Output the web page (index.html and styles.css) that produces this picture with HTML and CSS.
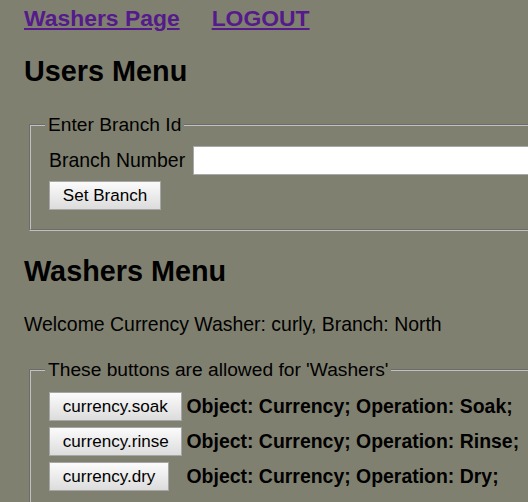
FILE: index.html
```html
<!DOCTYPE html>
<html>
<head>
<meta charset="utf-8">
<title>Washers</title>
<link rel="stylesheet" href="styles.css">
</head>
<body>
<nav class="topnav">
  <a class="navlink" href="#">Washers Page</a>
  <a class="navlink" href="#">LOGOUT</a>
</nav>
<h2 class="menu-title first">Users Menu</h2>
<fieldset class="box box-branch">
  <legend class="box-legend">Enter Branch Id</legend>
  <div class="box-body">
    <div class="field-row">
      <label class="field-label" for="branch">Branch Number</label>
      <input class="field-input" id="branch" type="text">
    </div>
    <div class="btn-row">
      <button class="btn" type="button">Set Branch</button>
    </div>
  </div>
</fieldset>
<h2 class="menu-title">Washers Menu</h2>
<p class="welcome">Welcome Currency Washer: curly, Branch: North</p>
<fieldset class="box box-actions">
  <legend class="box-legend">These buttons are allowed for 'Washers'</legend>
  <div class="box-body">
    <div class="action-grid">
      <div class="action-cell"><button class="btn" type="button">currency.soak</button></div>
      <div class="action-desc">Object: Currency; Operation: Soak;</div>
      <div class="action-cell"><button class="btn" type="button">currency.rinse</button></div>
      <div class="action-desc">Object: Currency; Operation: Rinse;</div>
      <div class="action-cell"><button class="btn" type="button">currency.dry</button></div>
      <div class="action-desc">Object: Currency; Operation: Dry;</div>
    </div>
  </div>
</fieldset>
</body>
</html>
```
FILE: styles.css
```css
html {
  background: #808070;
  overflow: hidden;
}
body {
  margin: 0;
  padding: 0 0 0 24px;
  font-family: "Liberation Sans", Arial, sans-serif;
  font-size: 19.2px;
  color: #000;
  background: #808070;
  width: 900px;
}
.topnav {
  display: flex;
  gap: 32px;
  margin-top: 4.8px;
  font-size: 22.9px;
  font-weight: bold;
}
.navlink {
  color: #551a8b;
  text-decoration: underline;
}
.menu-title {
  margin: 24.3px 0 0;
  font-size: 28.8px;
  font-weight: bold;
}
.menu-title.first {
  margin-top: 23.7px;
}
.box {
  margin: 25.2px 0 0 5px;
  padding: 0 0 18.3px 14px;
  border: 2px groove #c0c0c0;
  width: 800px;
}
.box-actions {
  margin-top: 23.2px;
}
.box-legend {
  padding: 0 3px;
}
.box-body {
  padding: 10.8px 0 0 4px;
}
.box-actions .box-body {
  padding-top: 11.3px;
}
.field-row {
  display: flex;
  align-items: center;
  gap: 8px;
}
.field-label {
  font-size: 19.45px;
}
.field-input {
  box-sizing: border-box;
  height: 29px;
  width: 500px;
  margin: 0;
  border: 1px solid #a9a9a9;
  background: #fff;
  font: inherit;
}
.btn-row {
  margin-top: 6px;
}
.btn {
  box-sizing: border-box;
  height: 29px;
  margin: 0;
  padding: 0 12.8px;
  border: 1px solid #a6a6a6;
  border-radius: 0;
  background: linear-gradient(#fbfbfb, #dcdcdc);
  font-family: "Liberation Sans", Arial, sans-serif;
  font-size: 17.07px;
  color: #000;
}
.action-grid {
  display: grid;
  grid-template-columns: auto 1fr;
  column-gap: 4px;
  row-gap: 6px;
  align-items: center;
}
.action-desc {
  font-weight: bold;
  font-size: 19.45px;
}
.welcome {
  margin: 24.6px 0 0;
  font-size: 19.45px;
}
```
